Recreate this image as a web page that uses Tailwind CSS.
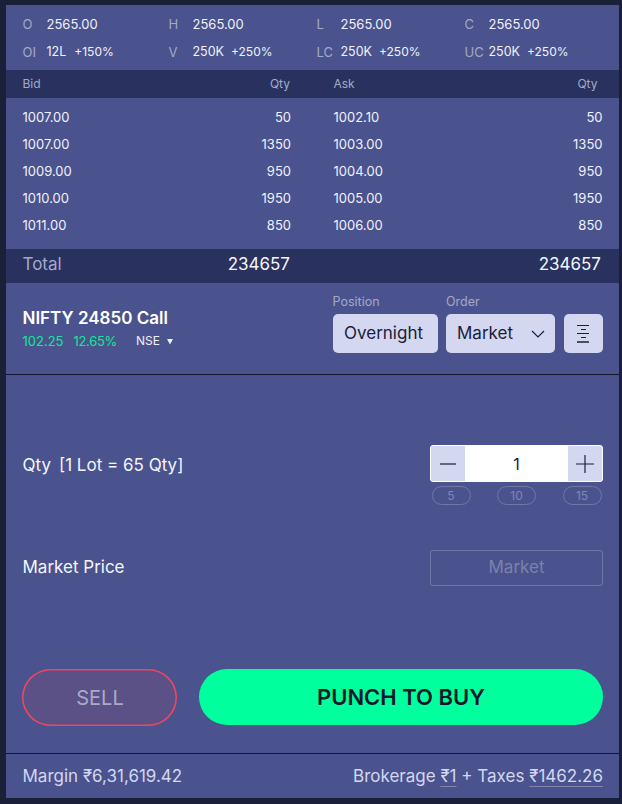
<!DOCTYPE html>
<html lang="en">
<head>
    <meta charset="UTF-8">
    <meta name="viewport" content="width=device-width, initial-scale=1.0">
    <script src="https://cdn.jsdelivr.net/npm/@tailwindcss/browser@4"></script>
    <title>Order</title>
</head>
<body class="bg-[#1b2039] font-['Inter','Noto_Sans',sans-serif] h-[804px] overflow-hidden">
    <div class="mx-[5.5px] mt-[5px] w-[613px] h-[793px] bg-[#4a538e] text-white flex flex-col">

        <!-- OHLC -->
        <div class="h-[65px] pl-[17px] pt-[9px] text-[13px] leading-[20px] grid grid-cols-[146px_148px_148px_1fr] grid-rows-[20px_20px] gap-y-[8px] text-[#f0f1fa]">
            <div class="flex"><span class="w-[24px] text-[#a5a9c8]">O</span><span>2565.00</span></div>
            <div class="flex"><span class="w-[24px] text-[#a5a9c8]">H</span><span>2565.00</span></div>
            <div class="flex"><span class="w-[24px] text-[#a5a9c8]">L</span><span>2565.00</span></div>
            <div class="flex"><span class="w-[24px] text-[#a5a9c8]">C</span><span>2565.00</span></div>
            <div class="flex text-[12.5px]"><span class="w-[24px] text-[13px] text-[#a5a9c8]">OI</span><span>12L</span><span class="ml-[8px] text-[12px]">+150%</span></div>
            <div class="flex text-[12.5px]"><span class="w-[24px] text-[13px] text-[#a5a9c8]">V</span><span>250K</span><span class="ml-[7px] text-[12px]">+250%</span></div>
            <div class="flex text-[12.5px]"><span class="w-[24px] text-[13px] text-[#a5a9c8]">LC</span><span>250K</span><span class="ml-[7px] text-[12px]">+250%</span></div>
            <div class="flex text-[12.5px]"><span class="w-[24px] text-[13px] text-[#a5a9c8]">UC</span><span>250K</span><span class="ml-[7px] text-[12px]">+250%</span></div>
        </div>

        <!-- Depth header -->
        <div class="h-[28px] bg-[#29325f] flex items-start pt-[5px] pl-[17px] text-[12px] leading-[18px] text-[#a5a9c8]">
            <div class="w-[267.5px] flex justify-between"><span>Bid</span><span>Qty</span></div>
            <div class="w-[264px] ml-[43.5px] flex justify-between"><span>Ask</span><span>Qty</span></div>
        </div>

        <!-- Depth rows -->
        <div class="h-[151px] pt-[6px] pl-[17px] text-[13px] text-[#f0f1fa]">
            <div class="h-[27px] flex items-center"><div class="w-[268.5px] flex justify-between"><span>1007.00</span><span>50</span></div><div class="w-[269px] ml-[42.5px] flex justify-between"><span>1002.10</span><span>50</span></div></div>
            <div class="h-[27px] flex items-center"><div class="w-[268.5px] flex justify-between"><span>1007.00</span><span>1350</span></div><div class="w-[269px] ml-[42.5px] flex justify-between"><span>1003.00</span><span>1350</span></div></div>
            <div class="h-[27px] flex items-center"><div class="w-[268.5px] flex justify-between"><span>1009.00</span><span>950</span></div><div class="w-[269px] ml-[42.5px] flex justify-between"><span>1004.00</span><span>950</span></div></div>
            <div class="h-[27px] flex items-center"><div class="w-[268.5px] flex justify-between"><span>1010.00</span><span>1950</span></div><div class="w-[269px] ml-[42.5px] flex justify-between"><span>1005.00</span><span>1950</span></div></div>
            <div class="h-[27px] flex items-center"><div class="w-[268.5px] flex justify-between"><span>1011.00</span><span>850</span></div><div class="w-[269px] ml-[42.5px] flex justify-between"><span>1006.00</span><span>850</span></div></div>
        </div>

        <!-- Total -->
        <div class="h-[34px] bg-[#29325f] flex items-start pt-[2px] pl-[17px] text-[17px] leading-[26px]">
            <div class="w-[267.5px] flex justify-between"><span class="text-[#a5a9c8]">Total</span><span class="text-[#f4f5fb]">234657</span></div>
            <div class="w-[311px] flex justify-end text-[#f4f5fb]">234657</div>
        </div>

        <!-- Instrument and order type -->
        <div class="h-[92px] border-b border-[#14172b] pl-[17px] pr-[16px] flex justify-between">
            <div class="pt-[25px]">
                <div class="text-[17px] leading-[20px] font-semibold">NIFTY 24850 Call</div>
                <div class="mt-[5px] text-[13px] leading-[16px] flex items-center">
                    <span class="text-[#12e896]">102.25</span>
                    <span class="ml-[10px] tracking-[-0.3px] text-[#12e896]">12.65%</span>
                    <span class="ml-[19px] text-[12px] text-[#eef0fa]">NSE</span>
                    <svg class="ml-[6px]" width="8" height="7" viewBox="0 0 8 7"><path d="M1 1h6L4 6.5z" fill="#eef0fa"/></svg>
                </div>
            </div>
            <div class="flex items-end gap-[8.5px] pb-[21px]">
                <div>
                    <div class="text-[12.5px] leading-[16px] text-[#a5a9c8] mb-[4px]">Position</div>
                    <div class="w-[105px] h-[39px] pt-[1px] pl-[11.5px] rounded-[5px] bg-[#d3d7f0] text-[#1b2039] text-[17px] flex items-center">Overnight</div>
                </div>
                <div>
                    <div class="text-[12.5px] leading-[16px] text-[#a5a9c8] mb-[4px]">Order</div>
                    <div class="w-[109px] h-[39px] rounded-[5px] bg-[#d3d7f0] text-[#1b2039] text-[17px] flex items-center justify-between pl-[11px] pr-[10px]">
                        <span class="pt-[1px]">Market</span>
                        <svg width="14" height="8" viewBox="0 0 14 8" fill="none" stroke="#1b2039" stroke-width="1.2"><path d="M1 1l6 6 6-6"/></svg>
                    </div>
                </div>
                <div class="w-[39px] h-[39px] rounded-[5px] bg-[#d3d7f0] flex items-center justify-center">
                    <svg width="12" height="18" viewBox="0 0 12 18" fill="none" stroke="#1b2039"><path d="M0 .5h12M4 4.500h5M0 8.500h12M4 12.500h5"/><path d="M0 17h12" stroke-width="1.500"/></svg>
                </div>
            </div>
        </div>

        <!-- Qty and price -->
        <div class="h-[378px] flex flex-col pl-[17px] pr-[15.500px]">
            <div class="mt-[70px] flex justify-between">
                <div class="mt-[10px] text-[17px] leading-[20px] text-[#f4f5fb]"><span>Qty</span><span class="ml-[8px]">[1 Lot = 65 Qty]</span></div>
                <div class="w-[173px]">
                    <div class="h-[37px] rounded-[3px] border border-white bg-white flex items-center text-[#1b2039]">
                        <div class="w-[34px] h-full bg-[#d3d7f0] rounded-l-[2px] flex items-center justify-center">
                            <svg width="16" height="2" viewBox="0 0 16 2"><path d="M0 1h16" stroke="#1b2039" stroke-width="1.2"/></svg>
                        </div>
                        <div class="flex-1 text-center text-[16px]">1</div>
                        <div class="w-[34px] h-full bg-[#d3d7f0] rounded-r-[2px] flex items-center justify-center">
                            <svg width="18" height="18" viewBox="0 0 18 18"><path d="M0 9h18M9 0v18" stroke="#1b2039" stroke-width="1.2"/></svg>
                        </div>
                    </div>
                    <div class="mt-[4px] px-[1.5px] flex justify-between text-[12px] text-[#8086ae]">
                        <div class="w-[39px] h-[19px] rounded-full border border-[#7278a4] flex items-center justify-center">5</div>
                        <div class="w-[39px] h-[19px] rounded-full border border-[#7278a4] flex items-center justify-center">10</div>
                        <div class="w-[39px] h-[19px] rounded-full border border-[#7278a4] flex items-center justify-center">15</div>
                    </div>
                </div>
            </div>
            <div class="mt-[45px] flex justify-between items-center">
                <div class="text-[17px] text-[#f4f5fb]">Market Price</div>
                <div class="w-[173px] h-[36px] rounded-[3px] border border-[#7278a4] flex items-center justify-center text-[17px] text-[#7c82aa]">Market</div>
            </div>
            <div class="mt-[83px] flex justify-between">
                <div class="w-[155px] h-[57px] -ml-[1px] pl-[2px] rounded-full shadow-[inset_0_0_0_1.5px_#f0475f] bg-[#5b5186] flex items-center justify-center text-[20px] text-[#a9a9c8]">SELL</div>
                <div class="w-[404px] h-[56px] rounded-full bg-[#00ff9d] flex items-center justify-center text-[22px] font-semibold text-[#14172b]">PUNCH TO BUY</div>
            </div>
        </div>

        <!-- Footer -->
        <div class="flex-1 pt-[2px] border-t border-[#14172b] pl-[17px] pr-[15.500px] flex items-center justify-between text-[17px] text-[#d3d7f0]">
            <span>Margin ₹6,31,619.42</span>
            <span>Brokerage <span class="underline decoration-[#8086ae] underline-offset-[4px]">₹1</span> + Taxes <span class="underline decoration-[#8086ae] underline-offset-[4px]">₹1462.26</span></span>
        </div>
    </div>
</body>
</html>
